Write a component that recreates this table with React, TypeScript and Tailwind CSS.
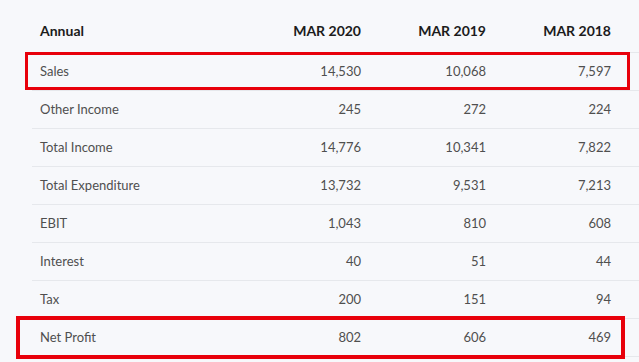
const years = ["MAR 2020", "MAR 2019", "MAR 2018"];

const rows: [string, string, string, string][] = [
  ["Sales", "14,530", "10,068", "7,597"],
  ["Other Income", "245", "272", "224"],
  ["Total Income", "14,776", "10,341", "7,822"],
  ["Total Expenditure", "13,732", "9,531", "7,213"],
  ["EBIT", "1,043", "810", "608"],
  ["Interest", "40", "51", "44"],
  ["Tax", "200", "151", "94"],
  ["Net Profit", "802", "606", "469"],
];

export default function App() {
  return (
    <main
      className="relative h-[362px] w-[639px] overflow-hidden bg-[#f7f8fb]"
      style={{ fontFamily: "Lato, 'Open Sans', sans-serif" }}
    >
      <div className="ml-[32px]">
        <div className="grid h-[53px] grid-cols-[232px_125px_125px_125px] border-b border-[#e6e8ec] pt-[9px] text-[14px] font-bold text-[#1c1c1c]">
          <div className="flex items-center pl-2">Annual</div>
          {years.map((y) => (
            <div key={y} className="flex items-center justify-end pr-7">
              {y}
            </div>
          ))}
        </div>
        {rows.map(([label, a, b, c]) => (
          <div
            key={label}
            className="grid h-[38px] grid-cols-[232px_125px_125px_125px] border-b border-[#e6e8ec] text-[13px] text-[#4f4f4f]"
          >
            <div className="flex items-center pl-2">{label}</div>
            <div className="flex items-center justify-end pr-7">{a}</div>
            <div className="flex items-center justify-end pr-7">{b}</div>
            <div className="flex items-center justify-end pr-7">{c}</div>
          </div>
        ))}
      </div>

      {/* highlight boxes */}
      <div className="absolute left-[25px] top-[52px] h-[38px] w-[605px] border-[3px] border-[#e8000b]" />
      <div className="absolute left-[16px] top-[316px] h-[43px] w-[609px] border-[4px] border-[#e8000b]" />
    </main>
  );
}
